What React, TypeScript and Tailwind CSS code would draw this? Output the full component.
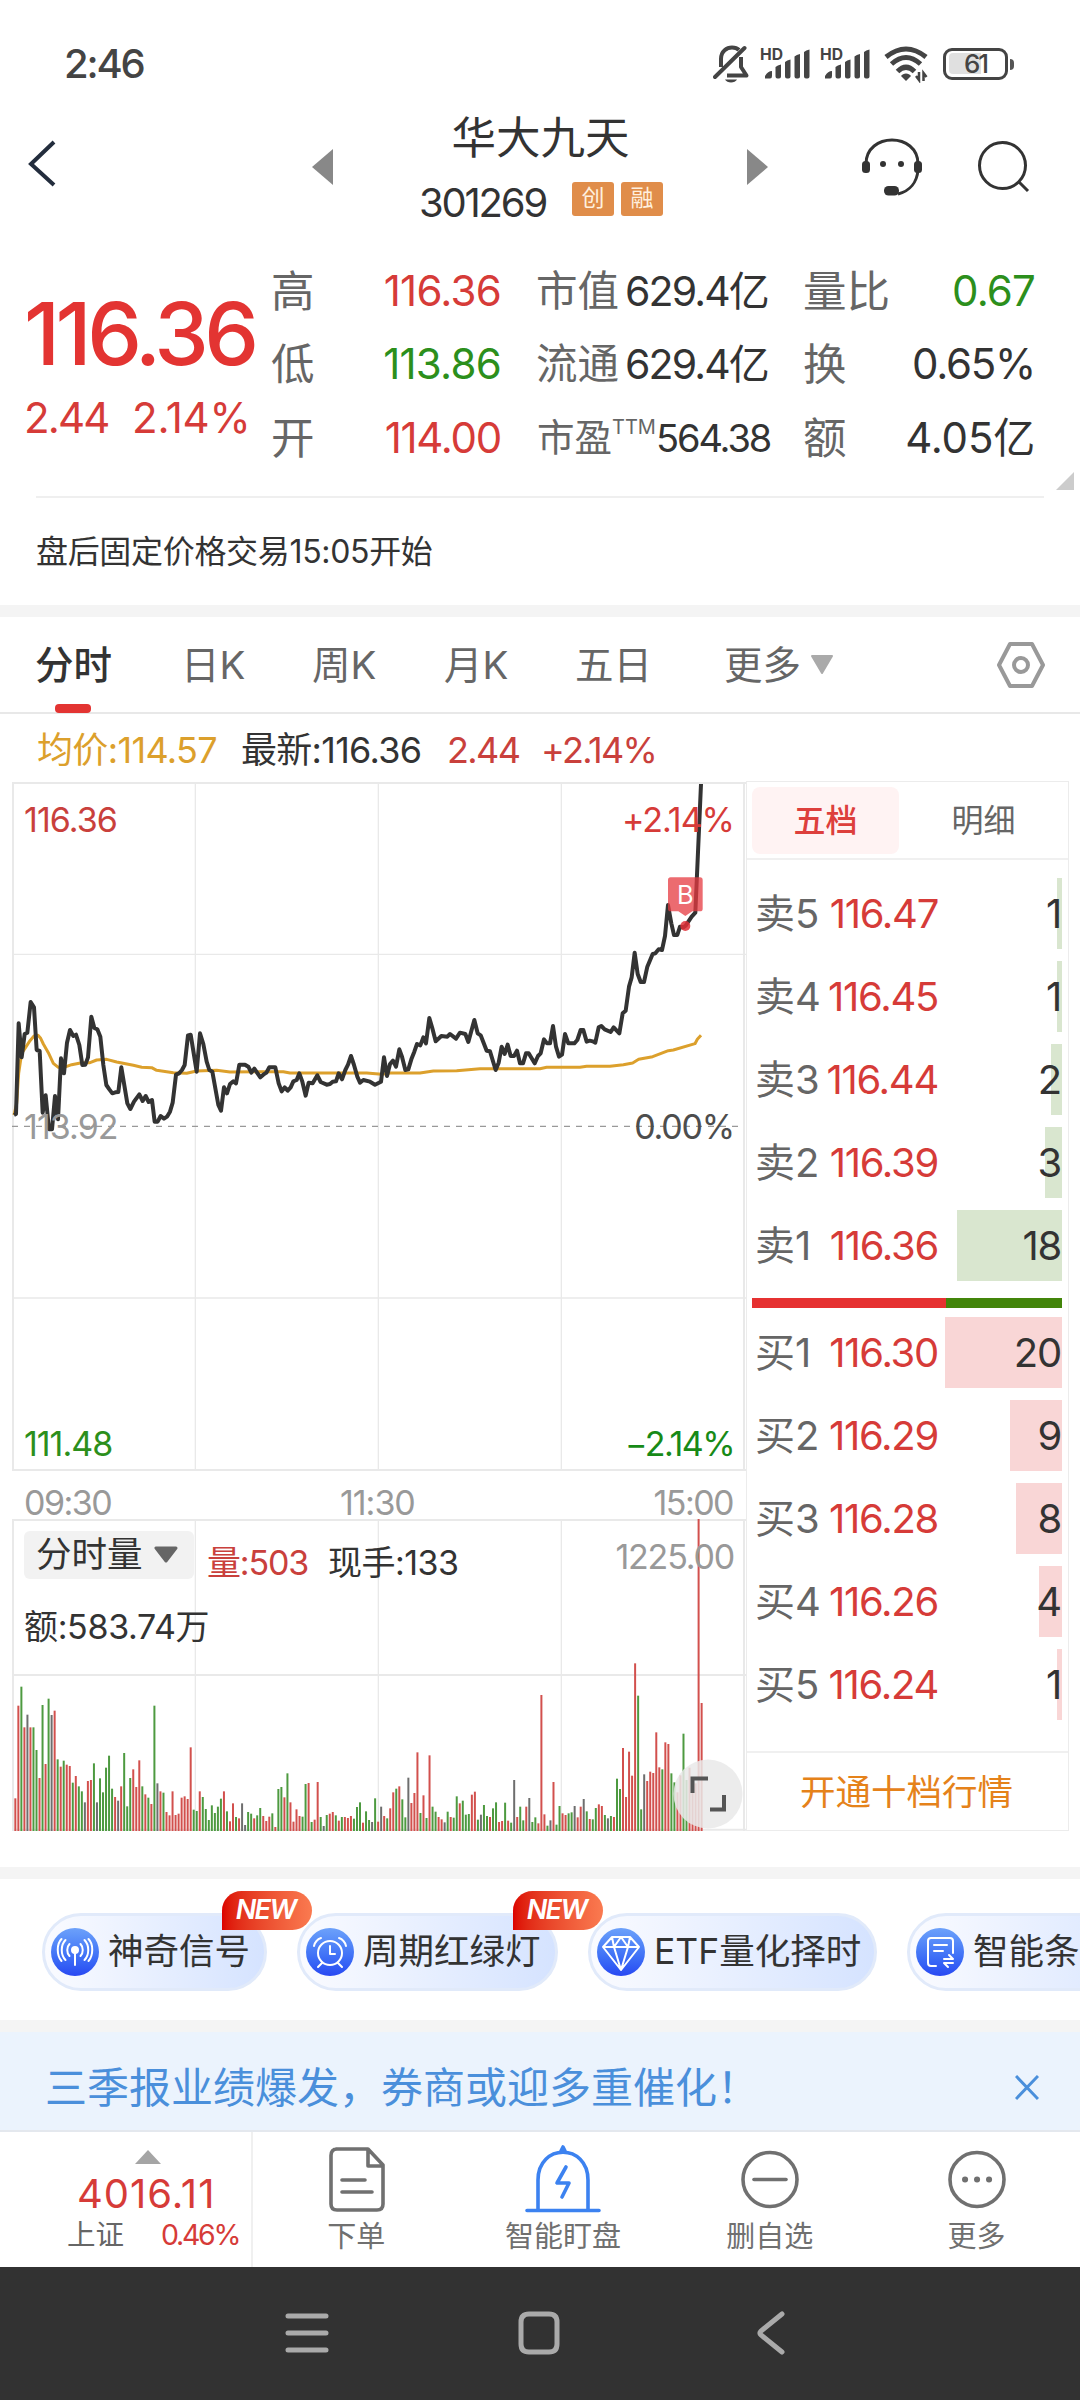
import React from "react";

// Trend line points, three units per screen pixel
const PRICE_POINTS =
  "42,1035 48,1032 56,760 65,862 74,792 82,788 92,696 102,712 110,840 119,843 128,1028 137,976 147,1078 156,1078 165,978 174,1048 183,865 192,910 201,818 210,780 220,798 228,794 238,825 247,885 256,884 264,862 274,740 283,774 292,778 301,800 310,885 319,945 328,958 337,970 346,967 355,966 364,892 382,1000 391,1017 402,995 418,973 428,993 437,978 446,996 456,990 464,1055 473,1055 482,1038 492,1046 501,1040 510,1025 518,998 528,914 537,910 546,900 554,885 564,796 572,794 590,905 600,790 610,822 620,875 628,900 637,905 655,1005 663,1022 672,952 681,970 690,942 700,934 708,940 718,884 735,884 745,890 754,908 763,896 781,922 790,914 799,908 808,892 826,892 836,940 845,964 854,952 863,962 872,952 880,934 890,930 898,910 907,935 917,977 926,938 938,940 952,916 962,936 980,944 990,942 998,935 1008,934 1016,910 1026,928 1036,900 1044,884 1053,858 1062,885 1072,920 1080,938 1090,930 1110,935 1125,944 1143,935 1152,862 1161,918 1170,882 1179,872 1188,890 1198,838 1206,860 1216,900 1225,898 1234,868 1243,845 1251,822 1261,826 1270,802 1278,820 1288,744 1297,775 1307,814 1324,798 1342,800 1350,792 1368,806 1380,788 1396,792 1405,816 1423,750 1433,790 1442,796 1460,842 1470,844 1487,900 1496,878 1505,830 1514,852 1523,824 1532,858 1542,858 1551,842 1560,880 1569,880 1578,850 1586,850 1604,880 1614,858 1622,850 1632,808 1641,820 1650,820 1659,768 1668,830 1677,860 1686,854 1695,792 1705,820 1723,820 1732,810 1742,780 1750,780 1760,815 1769,812 1778,814 1786,818 1796,772 1804,768 1814,778 1832,786 1841,772 1858,790 1868,730 1877,722 1887,650 1895,622 1904,548 1913,612 1922,636 1932,636 1942,590 1958,552 1966,550 1976,538 1986,540 1995,498 2004,405 2014,460 2022,495 2032,495 2040,470 2050,472 2057,467 2075,440 2086,428 2103,42";

const AVG_POINTS =
  "42,1035 50,1000 56,910 65,850 75,835 90,812 102,798 114,796 122,805 130,822 145,848 160,880 175,892 190,893 215,884 245,878 270,878 290,870 320,868 350,876 400,886 425,892 455,893 470,901 520,908 560,910 590,903 650,901 690,906 850,905 870,909 1100,909 1145,913 1170,909 1260,909 1300,903 1370,902 1440,896 1620,896 1640,892 1740,892 1760,889 1830,889 1870,884 1898,879 1916,868 1958,860 2005,842 2020,840 2085,821 2092,808 2103,796";

// One entry per minute: colour key + top of the bar
const VOLUME =
  "r1135 r857 g800 r922 k884 r922 g922 g990 r1074 g855 r1032 g836 k885 r872 g1018 r1040 g1022 r1034 r1038 g1088 r1068 g1099 g1114 k1147 r1083 r1080 g1030 k1147 g1075 g1117 g1043 g1007 g1106 r1131 k1142 r1099 g999 g1159 g1074 r1048 r1101 r1021 g1099 r1123 g1133 r1152 g857 k1090 r1114 g1118 r1176 r1186 r1114 r1185 r1181 r1133 r1129 r1137 r982 g1169 g1173 r1114 g1131 g1167 g1200 g1156 g1179 g1160 g1136 r1114 g1174 r1204 r1150 g1191 r1195 k1150 k1215 g1176 g1181 r1195 g1186 g1164 r1188 r1203 r1190 g1180 r1221 g1107 g1101 r1132 g1060 r1147 r1205 r1168 r1188 g1190 g1092 r1089 g1206 r1199 r1086 g1191 k1218 g1185 r1181 r1176 g1186 r1202 g1191 r1191 r1194 r1188 g1196 g1161 g1147 r1208 g1174 g1200 k1206 g1135 r1205 k1160 r1188 g1195 r1165 r1117 g1106 r1099 g1138 g1192 k1073 r1149 r1119 r997 g1179 r1126 g1194 r1006 g1160 g1175 r1191 r1198 k1207 g1175 r1191 g1193 g1129 r1150 g1142 g1184 g1182 r1124 r1115 g1199 k1184 g1155 g1188 r1191 g1165 g1147 r1206 r1203 g1148 r1202 g1208 k1080 r1191 g1160 g1201 r1160 k1134 g1206 g1192 r1210 r825 r1183 g1217 k1201 r1086 g1214 g1158 r1180 r1185 g1180 g1177 k1158 r1192 r1160 k1137 g1174 r1197 g1198 g1164 r1153 r1158 g1185 k1195 g1188 r1191 g1076 g1107 r984 r1131 r995 r1067 r730 g827 g1168 k1063 r1083 r1055 r1059 r937 r1042 g1048 r967 r972 g1060 g1087 r1117 r1066 g941 g1080 r1043 r1088 r1090 r297 r849".split(
    " ",
  );

const BAR_COLORS: Record<string, string> = {
  r: "#d2504d",
  g: "#4d9a40",
  k: "#6e6e6e",
};

interface OrderLevel {
  label: string;
  price: string;
  qty: number;
  bar: number;
}

const SELLS: OrderLevel[] = [
  { label: "卖5", price: "116.47", qty: 1, bar: 5 },
  { label: "卖4", price: "116.45", qty: 1, bar: 5 },
  { label: "卖3", price: "116.44", qty: 2, bar: 11 },
  { label: "卖2", price: "116.39", qty: 3, bar: 17 },
  { label: "卖1", price: "116.36", qty: 18, bar: 105 },
];

const BUYS: OrderLevel[] = [
  { label: "买1", price: "116.30", qty: 20, bar: 117 },
  { label: "买2", price: "116.29", qty: 9, bar: 52 },
  { label: "买3", price: "116.28", qty: 8, bar: 46 },
  { label: "买4", price: "116.26", qty: 4, bar: 23 },
  { label: "买5", price: "116.24", qty: 1, bar: 5 },
];

const SignalBars = () => (
  <svg width="52" height="34" viewBox="0 0 52 34" className="shrink-0">
    <text
      x="0"
      y="12.5"
      fontSize="16"
      fontWeight="700"
      fill="#444"
      textLength="23"
      lengthAdjust="spacingAndGlyphs"
    >
      HD
    </text>
    <path
      d="M5 31.500v-2.500q3-5 7-5v5q0 2.500-2 2.500zM15.500 20q2-2 5.500-2.500v12q0 2-2 2h-1.500q-2 0-2-2zM25 15q2-2 5.500-2.500v17q0 2-2 2H27q-2 0-2-2zM34.500 9.500q2-2 5.500-2.500v22.500q0 2-2 2h-1.500q-2 0-2-2zM44 5q2-2 5.500-2.500v27q0 2-2 2H46q-2 0-2-2z"
      fill="#444"
    />
  </svg>
);

const StatusBar = () => (
  <div className="flex h-[100px] items-center pt-7 pl-[64px] text-[#444]">
    <span className="w-[649px] text-[40px] leading-[40px] font-medium tracking-[-0.055em]">
      2:46
    </span>
    <svg width="38" height="40" viewBox="0 0 38 40" fill="none" stroke="#444" strokeWidth="4">
      <path d="M2 33 31.500 4" strokeLinecap="round" />
      <path d="M8 23V15C8 7 14 3.500 19 3.500c3 0 5 .5 7 2.500M28 13v10l5.500 8.500H14" strokeLinejoin="round" />
      <path d="M12 35.500h12c-2 4-10 4-12 0z" fill="#444" stroke="none" />
    </svg>
    <div className="ml-[9px] flex gap-2">
      <SignalBars />
      <SignalBars />
    </div>
    <svg width="48" height="38" viewBox="0 0 48 38" fill="none" stroke="#444" className="ml-[10px]">
      <path d="M4 12Q24-4 44 12M9.500 19Q24 6 38.500 19M15.500 26.500Q24 18 32.500 26.500" strokeWidth="5" />
      <path d="M24 36l-5-5c2-3.500 8-3.500 10 0z" fill="#444" stroke="none" />
      <path d="M37 27v8l-3-4M41.500 36v-8l3 4" strokeWidth="2.500" />
    </svg>
    <div className="ml-[13px] flex items-center">
      <div className="relative flex h-8 w-[65px] items-center justify-center rounded-[9px] border-[3.500px] border-[#444]">
        <div className="absolute top-[2px] left-[3px] h-[21px] w-[32px] rounded-l bg-[#e0e0e0]" />
        <span className="relative text-[26px] leading-6 font-medium tracking-[-0.08em]">61</span>
      </div>
      <div className="ml-[2px] h-[11px] w-[4px] rounded-r bg-[#555]" />
    </div>
  </div>
);

const Header = () => (
  <div className="flex h-[150px]">
    <svg width="312" height="150" viewBox="0 0 312 150" fill="none">
      <path d="M54 42 31 64 54 85" stroke="#232d3d" strokeWidth="4" />
    </svg>
    <svg width="22" height="150" viewBox="0 0 22 150">
      <path d="M0 67 21 49V85z" fill="#888" />
    </svg>
    <div className="w-[413px] text-[#333]">
      <div className="mt-[13px] text-center text-[44.500px] leading-[50px]">华大九天</div>
      <div className="mt-[14px] flex items-center pl-[85px]">
        <span className="w-[153px] text-[40px] leading-[52px] tracking-[-0.055em]">301269</span>
        {["创", "融"].map((tag) => (
          <span
            key={tag}
            className="mr-[7px] -mt-2 h-[34px] w-[42px] rounded-[3px] bg-[#e08d4a] text-center text-[23px] leading-[33px] text-[#fff0df]"
          >
            {tag}
          </span>
        ))}
      </div>
    </div>
    <svg width="22" height="150" viewBox="0 0 22 150">
      <path d="M0 49V85L21 67z" fill="#888" />
    </svg>
    <svg width="70" height="150" viewBox="0 0 70 150" className="ml-[88px]" fill="none">
      <path d="M9 67v-3c0-32 52-32 52 0v6c-1 12-8 21-20 24" stroke="#333" strokeWidth="3" />
      <rect x="5" y="61" width="8" height="12" rx="3.5" fill="#333" />
      <rect x="57" y="61" width="8" height="12" rx="3.5" fill="#333" />
      <rect x="27" y="86" width="15" height="9.5" rx="4.5" fill="#333" />
      <circle cx="26" cy="64" r="3" fill="#333" />
      <circle cx="44" cy="64" r="3" fill="#333" />
    </svg>
    <svg width="60" height="150" viewBox="0 0 60 150" className="ml-[46px]" fill="none" stroke="#333" strokeWidth="3">
      <circle cx="29.500" cy="65.500" r="23" />
      <path d="m46 82 9 9" />
    </svg>
  </div>
);

interface QuoteRowProps {
  label: string;
  value: string;
  valueClass: string;
}

const QuoteRow: React.FC<QuoteRowProps> = ({ label, value, valueClass }) => (
  <div className="flex h-[73.500px] items-center justify-between whitespace-nowrap">
    <span className="-ml-px text-[43.500px] leading-[50px] text-[#666]">{label}</span>
    <span className={`text-[42px] leading-[50px] ${valueClass}`}>{value}</span>
  </div>
);

const MarketRow: React.FC<{ label: string; value: string }> = ({ label, value }) => (
  <div className="flex h-[73.500px] items-center justify-between whitespace-nowrap">
    <span className="-ml-px text-[41.500px] leading-[50px] text-[#666]">{label}</span>
    <span className="text-[41px] leading-[50px] tracking-[-0.045em] text-[#333]">{value}</span>
  </div>
);

const Quote = () => (
  <div className="h-[355px]">
    <div className="flex h-[246px]">
      <div className="w-[272px] shrink-0 pt-[34px] pl-[24px] text-[#e33432]">
        <div className="text-[87px] leading-[100px] font-medium tracking-[-0.052em]">116.36</div>
        <div className="mt-[8px] flex text-[42px] leading-[52px] text-[#d63b38]">
          <span className="w-[108px] tracking-[-0.045em]">2.44</span>
          <span className="tracking-[-0.005em]">2.14%</span>
        </div>
      </div>
      <div className="w-[229px] shrink-0 pt-[4px]">
        <QuoteRow label="高" value="116.36" valueClass="tracking-[-0.018em] text-[#d63b38]" />
        <QuoteRow label="低" value="113.86" valueClass="tracking-[-0.018em] text-[#2c8f1c]" />
        <QuoteRow label="开" value="114.00" valueClass="tracking-[-0.03em] text-[#d63b38]" />
      </div>
      <div className="ml-[36px] w-[231px] shrink-0 pt-[4px]">
        <MarketRow label="市值" value="629.4亿" />
        <MarketRow label="流通" value="629.4亿" />
        <div className="flex h-[73.500px] items-center justify-between whitespace-nowrap">
          <span className="flex text-[37.500px] leading-[50px] text-[#666]">
            市盈<span className="-mt-[11px] text-[20px] leading-[50px]">TTM</span>
          </span>
          <span className="text-[38px] leading-[50px] tracking-[-0.055em] text-[#333]">564.38</span>
        </div>
      </div>
      <div className="ml-[36px] w-[231px] shrink-0 pt-[4px]">
        <QuoteRow label="量比" value="0.67" valueClass="tracking-[-0.02em] text-[#2c8f1c]" />
        <QuoteRow label="换" value="0.65%" valueClass="tracking-[-0.03em] text-[#333]" />
        <QuoteRow label="额" value="4.05亿" valueClass="tracking-[-0.005em] text-[#333]" />
      </div>
      <svg width="18" height="18" viewBox="0 0 18 18" className="mb-[6px] ml-[21px] shrink-0 self-end">
        <path d="M18 0v18H0z" fill="#ccc" />
      </svg>
    </div>
    <div className="mx-9 h-[2px] bg-[#efefef]" />
    <div className="pt-[29px] pl-[36px] text-[32px] leading-[50px] tracking-[-0.01em] text-[#333]">
      盘后固定价格交易15:05开始
    </div>
  </div>
);

const TABS = [
  { name: "日K", width: "w-[131px]" },
  { name: "周K", width: "w-[132px]" },
  { name: "月K", width: "w-[131px]" },
  { name: "五日", width: "w-[149px]" },
  { name: "更多", width: "w-[86px]" },
];

const PeriodTabs = () => (
  <div className="flex h-[97px] border-b-2 border-[#e8e8e8] pl-[35px] text-[38.500px] leading-[96px] text-[#666]">
    <div className="w-[146px]">
      <div className="h-[87px] font-medium text-[#333]">分时</div>
      <div className="ml-[20px] h-[9px] w-9 rounded-[4px] bg-[#e33432]" />
    </div>
    {TABS.map((tab) => (
      <span key={tab.name} className={`shrink-0 ${tab.width}`}>
        {tab.name}
      </span>
    ))}
    <svg width="24" height="96" viewBox="0 0 24 96">
      <path d="M2 39H22L12 56z" fill="#aaa" stroke="#aaa" strokeWidth="2" strokeLinejoin="round" />
    </svg>
    <svg width="52" height="96" viewBox="0 0 52 96" className="ml-[161px]" fill="none" stroke="#999" strokeWidth="4">
      <path d="M15 27H37L48 48 37 69H15L4 48z" strokeLinejoin="round" />
      <circle cx="26" cy="48" r="7" />
    </svg>
  </div>
);

const Legend = () => (
  <div className="flex h-[67px] pl-[37px] text-[36px] leading-[73px]">
    <span className="w-[204px] tracking-[-0.018em] text-[#dca02c]">均价:114.57</span>
    <span className="w-[206px] tracking-[-0.02em] text-[#333]">最新:116.36</span>
    <span className="w-[94px] tracking-[-0.045em] text-[#c9403c]">2.44</span>
    <span className="tracking-[-0.045em] text-[#c9403c]">+2.14%</span>
  </div>
);

const AXIS = "absolute text-[34px] leading-[40px]";

const PriceChart = () => (
  <div className="relative h-[690px]">
    <svg width="746" height="690" viewBox="0 33 2238 2070" fill="none">
      <g stroke="#e9e9e9">
        <path d="M36 39H2238M36 2100H2238M39 39V2100M2232 39V2100" strokeWidth="6" />
        <path d="M586 39V2100M1135 39V2100M1684 39V2100M36 553H2238M36 1584H2238" strokeWidth="4" />
      </g>
      <path d="M36 1069H2232" stroke="#999" strokeWidth="4" strokeDasharray="18 18" />
      <polyline points={AVG_POINTS} stroke="#dca02c" strokeWidth="9" strokeLinejoin="round" />
      <polyline points={PRICE_POINTS} stroke="#333" strokeWidth="12" strokeLinejoin="round" />
      <circle cx="2056" cy="468" r="15" fill="#e03038" fillOpacity="0.85" />
      <path
        d="M2012 322H2100q8 0 8 8V416q0 8-8 8H2077L2056 438 2035 424H2012q-8 0-8-8V330q0-8 8-8z"
        fill="#e63a40"
        fillOpacity="0.75"
      />
      <text x="2056" y="401" fontSize="76" fill="#fff" textAnchor="middle">
        B
      </text>
    </svg>
    <span className={`${AXIS} top-[19px] left-[24px] tracking-[-0.028em] text-[#c9403c]`}>
      116.36
    </span>
    <span className={`${AXIS} top-[19px] right-[12px] tracking-[-0.03em] text-[#d63b38]`}>
      +2.14%
    </span>
    <span className={`${AXIS} top-[326px] left-[24px] tracking-[-0.028em] text-[#999]`}>
      113.92
    </span>
    <span className={`${AXIS} top-[326px] right-[12px] tracking-[-0.035em] text-[#4d4d4d]`}>
      0.00%
    </span>
    <span className={`${AXIS} top-[643px] left-[24px] tracking-[-0.03em] text-[#2c8f1c]`}>
      111.48
    </span>
    <span className={`${AXIS} top-[643px] right-[12px] tracking-[-0.045em] text-[#178a17]`}>
      −2.14%
    </span>
  </div>
);

const VolumeChart = () => (
  <div className="relative h-[312px]">
    <svg width="746" height="312" viewBox="0 297 2238 936" fill="none">
      <g stroke="#e9e9e9">
        <path d="M36 300H2238M36 765H2238M36 1229H2238M39 300V1233M2232 300V1233" strokeWidth="6" />
        <path d="M586 300V1233M1135 300V1233M1684 300V1233" strokeWidth="4" />
      </g>
      {VOLUME.map((item, index) => (
        <path
          key={index}
          d={`M${46 + index * 9.07} 1233V${item.slice(1)}`}
          stroke={BAR_COLORS[item[0]]}
          strokeWidth="6"
        />
      ))}
    </svg>
    <div className="absolute top-[12px] left-[24px] flex h-12 w-[170px] items-center rounded-md bg-[#f2f2f2] pl-[12px] text-[35.500px] leading-[46px] text-[#333]">
      分时量
      <svg width="24" height="18" viewBox="0 0 24 18" className="ml-[11px]">
        <path d="M2 2H22L12 15z" fill="#666" stroke="#666" strokeWidth="3" strokeLinejoin="round" />
      </svg>
    </div>
    <span className={`${AXIS} top-[24px] left-[207px] tracking-[-0.035em] text-[#c9403c]`}>
      量:503
    </span>
    <span className={`${AXIS} top-[24px] left-[328px] tracking-[-0.015em] text-[#333]`}>
      现手:133
    </span>
    <span className={`${AXIS} top-[18px] right-[12px] tracking-[-0.035em] text-[#999]`}>
      1225.00
    </span>
    <span className={`${AXIS} top-[88px] left-[24px] tracking-[-0.01em] text-[#333]`}>
      额:583.74万
    </span>
    <svg width="70" height="70" viewBox="0 0 70 70" fill="none" className="absolute top-[240px] left-[673px]">
      <circle cx="35" cy="35" r="34.500" fill="#e9e9e9" fillOpacity="0.85" />
      <path d="M19.500 34V19.500H35M51 36V50.500H37" stroke="#555" strokeWidth="4" />
    </svg>
  </div>
);

interface OrderRowProps {
  level: OrderLevel;
  barClass: string;
}

const OrderRow: React.FC<OrderRowProps> = ({ level, barClass }) => (
  <div className="relative flex h-[83px] items-center pr-[7px] pl-[8px] text-[40px] leading-[72px]">
    <div
      className={`absolute top-[6px] right-[6px] h-[71px] ${barClass}`}
      style={{ width: level.bar }}
    />
    <span className="relative w-[70px] text-[#666]">{level.label}</span>
    <span className="relative w-[113px] text-right tracking-[-0.032em] text-[#d63b38]">
      {level.price}
    </span>
    <span className="relative flex-1 text-right tracking-[-0.03em] text-[#333]">{level.qty}</span>
  </div>
);

const OrderBook = () => (
  <div className="flex h-[1050px] w-[323px] flex-col border border-[#ececec]">
    <div className="flex h-[78px] border-b-2 border-[#f0f0f0] pt-[5px] pl-[5px] text-center text-[32px] leading-[68px]">
      <span className="h-[67px] w-[150px] rounded-lg bg-[#fff3f3] font-medium text-[#dd3f3c]">
        五档
      </span>
      <span className="w-[172px] text-[#666]">明细</span>
    </div>
    <div className="mt-[12px]">
      {SELLS.map((level) => (
        <OrderRow key={level.label} level={level} barClass="bg-[#d9e6cf]" />
      ))}
    </div>
    <div className="mt-[11px] mr-[6px] ml-[5px] flex h-[10px]">
      <div className="w-[194px] bg-[#e63131]" />
      <div className="flex-1 bg-[#43850a]" />
    </div>
    <div className="mt-[3px]">
      {BUYS.map((level) => (
        <OrderRow key={level.label} level={level} barClass="bg-[#f9d6d6]" />
      ))}
    </div>
    <div className="mt-auto h-[79px] border-t-2 border-[#f0f0f0] pr-[2px] text-center text-[35.500px] leading-[79px] text-[#e5821a]">
      开通十档行情
    </div>
  </div>
);

interface ChipProps {
  label: string;
  width: string;
  isNew?: boolean;
  children: React.ReactNode;
}

const Chip: React.FC<ChipProps> = ({ label, width, isNew, children }) => (
  <div
    className={`relative flex h-[78px] shrink-0 items-center rounded-full border-[3px] border-[#e1eafa] bg-linear-to-r from-[#fafbff] to-[#d5e3ff] pl-[6px] text-[35.500px] leading-[60px] whitespace-nowrap text-[#333] ${width}`}
  >
    <svg
      width="48"
      height="48"
      viewBox="0 0 48 48"
      fill="none"
      stroke="#fff"
      strokeWidth="2"
      strokeLinecap="round"
      strokeLinejoin="round"
      className="mr-[9px] shrink-0 rounded-full bg-linear-to-b from-[#6da1fa] to-[#2947f2]"
    >
      {children}
    </svg>
    {label}
    {isNew && (
      <span className="absolute -top-[25px] -right-[48px] h-[39px] w-[90px] rounded-t-[20px] rounded-br-[20px] bg-linear-to-r from-[#dc0000] to-[#fa7a50] pr-[3px] text-center text-[27px] leading-[38px] font-semibold tracking-[-0.06em] text-white italic">
        NEW
      </span>
    )}
  </div>
);

const Chips = () => (
  <div className="flex h-[141px] gap-[30px] overflow-hidden pt-[34px] pl-[42px]">
    <Chip label="神奇信号" width="w-[225px]" isNew>
      <circle cx="24" cy="22" r="3" fill="#fff" />
      <path d="M24 24v13M18.500 28c-3-3-3-9 0-12M29.500 28c3-3 3-9 0-12M14.500 32c-5-5-5-15 0-20M33.500 32c5-5 5-15 0-20M10.500 33c-5-6-5-17 0-22M37.500 33c5-6 5-17 0-22" />
    </Chip>
    <Chip label="周期红绿灯" width="w-[261px]" isNew>
      <circle cx="24" cy="25" r="12" />
      <path d="M24 18v8h5M16 35l-4 4M32 35l4 4M8 18c1-4 4-7 7-8M40 18c-1-4-4-7-7-8" />
    </Chip>
    <Chip label="ETF量化择时" width="w-[289px]">
      <path d="M15 9H33L42 19 24 42 6 19zM6 19H42M15 9l2 10 7 23 7-23 2-10M17 19l7-10 7 10" />
    </Chip>
    <Chip label="智能条件单" width="w-[270px]">
      <path d="M20 38H15q-3 0-3-3V13q0-3 3-3H34q3 0 3 3V25M18 17H31M18 23H27M28 31H37L33 27M37 35H28L32 39" />
    </Chip>
  </div>
);

const Banner = () => (
  <div className="flex h-[100px] items-center justify-between border-b-2 border-[#e4e8ee] bg-[#ebf3fd] pt-[13px] pr-[41px] pl-[45px] text-[#4a8fdb]">
    <span className="text-[42px] leading-[60px]">三季报业绩爆发，券商或迎多重催化！</span>
    <svg width="24" height="26" viewBox="0 0 24 26" fill="none" stroke="currentColor" strokeWidth="3">
      <path d="M1 1 23 24M23 1 1 24" />
    </svg>
  </div>
);

const ACTIONS = [
  {
    label: "下单",
    icon: (
      <path d="M13 3H45L60 19V58q0 6-6 6H14q-6 0-6-6V9.500Q8 3 14 3M45 4V20H59M19 34H42M19 46H49" />
    ),
  },
  {
    label: "智能盯盘",
    icon: (
      <g stroke="#3c82f0">
        <path d="M-3 64.500H69M8 64V34C8-3 58-3 58 34V64" />
        <path d="M33 1l2 4H31z" />
        <path d="M36 21 27 37H39L32 51" />
      </g>
    ),
  },
  {
    label: "删自选",
    icon: (
      <>
        <circle cx="33" cy="33.500" r="27" />
        <path d="M17 33.500H49" />
      </>
    ),
  },
  {
    label: "更多",
    icon: (
      <>
        <circle cx="33" cy="33.500" r="27" />
        <path d="M21 33.500h.1M33 33.500h.1M45 33.500h.1" strokeWidth="6" />
      </>
    ),
  },
];

const BottomBar = () => (
  <div className="flex h-[135px]">
    <div className="w-[253px] shrink-0 border-r-2 border-[#f0f0f0] pt-[17px] pl-[67px]">
      <svg width="26" height="16" viewBox="0 0 26 16" className="ml-[68px] block">
        <path d="M13 1 26 15H0z" fill="#a5a5a5" />
      </svg>
      <div className="mt-[4px] ml-[10px] text-[40px] leading-[50px] tracking-[0.025em] text-[#d63b38]">
        4016.11
      </div>
      <div className="flex text-[28.500px] leading-[32px] text-[#666]">
        上证
        <span className="ml-[37px] tracking-[-0.08em] text-[#d63b38]">0.46%</span>
      </div>
    </div>
    {ACTIONS.map((action) => (
      <div key={action.label} className="flex w-[207px] flex-col items-center pt-[13px]">
        <svg
          width="70"
          height="70"
          viewBox="-2 -1 70 70"
          fill="none"
          stroke="#707070"
          strokeWidth="3.600"
          strokeLinecap="round"
          strokeLinejoin="round"
          className="overflow-visible"
        >
          {action.icon}
        </svg>
        <span className="mt-[5px] text-[29px] leading-[34px] text-[#707070]">{action.label}</span>
      </div>
    ))}
  </div>
);

const NAV_ICONS = [
  "M3 5H41M3 22H41M3 39H41",
  "M12 3H32q8 0 8 8V33q0 8-8 8H12q-8 0-8-8V11q0-8 8-8z",
  "M33 3 12 20q-2 2 0 4L33 41",
];

const SystemNav = () => (
  <div className="flex h-[133px] items-center bg-[#323232] pl-[285px]">
    {NAV_ICONS.map((d) => (
      <svg
        key={d}
        width="44"
        height="44"
        viewBox="0 0 44 44"
        fill="none"
        stroke="#aaa"
        strokeWidth="5"
        strokeLinecap="round"
        className="mr-[188px] -mt-[2px]"
      >
        <path d={d} />
      </svg>
    ))}
  </div>
);

const App: React.FC = () => {
  return (
    <div className="h-[2400px] w-[1080px] overflow-hidden bg-white [font-family:Inter,'Noto_Sans_CJK_SC',sans-serif]">
      <StatusBar />
      <Header />
      <Quote />
      <div className="h-[12px] bg-[#f4f4f4]" />
      <PeriodTabs />
      <Legend />
      <div className="flex h-[1086px]">
        <div className="w-[746px]">
          <PriceChart />
          <div className="flex h-[48px] pr-[13px] pl-[24px] text-[34px] leading-[64px] tracking-[-0.045em] text-[#999]">
            <span className="w-[316px]">09:30</span>
            <span className="tracking-[-0.03em]">11:30</span>
            <span className="ml-auto">15:00</span>
          </div>
          <VolumeChart />
        </div>
        <OrderBook />
      </div>
      <div className="h-[12px] bg-[#f4f4f4]" />
      <Chips />
      <div className="h-[12px] bg-[#f4f4f4]" />
      <Banner />
      <BottomBar />
      <SystemNav />
    </div>
  );
};

export default App;
